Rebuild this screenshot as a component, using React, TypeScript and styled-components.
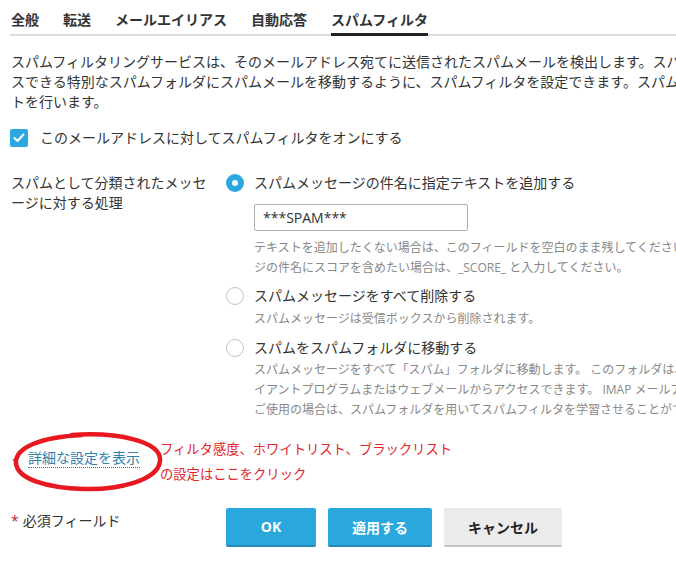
import React from "react";
import styled, { createGlobalStyle, css } from "styled-components";

const Global = createGlobalStyle`
  html, body { margin: 0; padding: 0; background: #fff; overflow: hidden; }
  body {
    font-family: "Open Sans", "Noto Sans CJK JP", sans-serif;
    font-size: 14px;
    color: #333;
  }
  * { box-sizing: border-box; }
`;

const Page = styled.div`
  width: 900px;
  padding: 0 10px;
  position: relative;
`;

const TabBar = styled.div`
  display: flex;
  gap: 24px;
  width: 666px;
  border-bottom: 2px solid #dcdcdc;
  height: 36px;
  padding-left: 1px;
`;

const Tab = styled.div<{ $active?: boolean }>`
  font-weight: 700;
  font-size: 14px;
  line-height: 20px;
  padding-top: 10px;
  color: #333;
  position: relative;
  white-space: nowrap;
  ${(p) =>
    p.$active &&
    css`
      &::after {
        content: "";
        position: absolute;
        left: 0;
        right: 0;
        bottom: -2px;
        height: 3px;
        background: #222;
      }
    `}
`;

const Intro = styled.p`
  margin: 16px 0 0 1px;
  line-height: 20px;
  white-space: nowrap;
`;

const CheckRow = styled.label`
  display: flex;
  align-items: center;
  gap: 12px;
  margin-top: 16px;
  height: 20px;
  line-height: 20px;
`;

const CheckBox = styled.span`
  width: 18px;
  height: 18px;
  border-radius: 2px;
  background: #2aa8df;
  display: inline-flex;
  align-items: center;
  justify-content: center;
`;

const FormGrid = styled.div<{ $top: number }>`
  display: grid;
  grid-template-columns: 204px 1fr;
  column-gap: 12px;
  margin-top: ${(p) => p.$top}px;
`;

const FieldLabel = styled.div`
  line-height: 20px;
  padding-left: 1px;
`;

const Options = styled.div`
  display: flex;
  flex-direction: column;
`;

const Option = styled.div<{ $gap?: number }>`
  margin-top: ${(p) => p.$gap ?? 0}px;
`;

const RadioRow = styled.label`
  display: flex;
  align-items: center;
  gap: 10px;
  line-height: 20px;
  white-space: nowrap;
`;

const Radio = styled.span<{ $checked?: boolean }>`
  width: 18px;
  height: 18px;
  border-radius: 50%;
  flex: none;
  ${(p) =>
    p.$checked
      ? css`
          background: #fff;
          border: 6px solid #2aa8df;
        `
      : css`
          background: #fff;
          border: 1px solid #c4c4c4;
        `}
`;

const Indent = styled.div`
  padding-left: 28px;
`;

const TextInput = styled.input`
  display: block;
  margin-top: 11px;
  width: 214px;
  height: 27px;
  border: 1px solid #b0b0b0;
  border-radius: 2px;
  padding: 0 8px;
  font-family: "Open Sans", "Noto Sans CJK JP", sans-serif;
  font-size: 14px;
  color: #333;
  outline: none;
`;

const Hint = styled.div<{ $top: number }>`
  margin-top: ${(p) => p.$top}px;
  font-size: 12px;
  line-height: 20px;
  color: #888;
  white-space: nowrap;
`;

const AdvancedRow = styled.div`
  display: flex;
  align-items: flex-start;
  margin-top: 17px;
  position: relative;
`;

const AdvLink = styled.a`
  display: flex;
  align-items: center;
  gap: 8px;
  margin-top: 12px;
  margin-left: 2px;
  width: 148px;
  color: #2f80ad;
  text-decoration: none;
  cursor: pointer;
`;

const LinkText = styled.span`
  display: inline-block;
  line-height: 18px;
  border-bottom: 1px dotted #2f6f9a;
`;

const Annotation = styled.div`
  color: #e3242b;
  font-size: 13.3px;
  line-height: 25px;
  white-space: nowrap;
`;

const Ellipse = styled.svg`
  position: absolute;
  left: 2px;
  top: -6px;
  pointer-events: none;
`;

const Required = styled.div`
  padding-top: 3px;
  line-height: 20px;
  padding-left: 1px;
`;

const Star = styled.span`
  color: #c0262d;
  margin-right: 4px;
`;

const Buttons = styled.div`
  display: flex;
  gap: 12px;
`;

const Button = styled.button<{ $primary?: boolean }>`
  height: 39px;
  min-width: 90px;
  padding: 0 24px;
  border: none;
  border-radius: 2px;
  font-family: "Open Sans", "Noto Sans CJK JP", sans-serif;
  font-size: 14px;
  font-weight: 700;
  cursor: pointer;
  ${(p) =>
    p.$primary
      ? css`
          background: #2aa8dd;
          color: #fff;
          border-bottom: 2px solid #2888b3;
        `
      : css`
          background: #ebebeb;
          color: #222;
          border-bottom: 2px solid #c2c2c2;
        `}
`;

export default function App() {
  return (
    <>
      <Global />
      <Page>
        <TabBar>
          <Tab>全般</Tab>
          <Tab>転送</Tab>
          <Tab>メールエイリアス</Tab>
          <Tab>自動応答</Tab>
          <Tab $active>スパムフィルタ</Tab>
        </TabBar>

        <Intro>
          スパムフィルタリングサービスは、そのメールアドレス宛てに送信されたスパムメールを検出します。スパムの件名に特別なテキストを追加したり、メールクライアントからアクセ
          <br />
          スできる特別なスパムフォルダにスパムメールを移動するように、スパムフィルタを設定できます。スパムフィルタは自動的にメッセージのテス
          <br />
          トを行います。
        </Intro>

        <CheckRow>
          <CheckBox>
            <svg width="12" height="10" viewBox="0 0 12 10">
              <polyline
                points="1.5,5 4.5,8 10.5,1.5"
                fill="none"
                stroke="#fff"
                strokeWidth="2"
                strokeLinecap="round"
                strokeLinejoin="round"
              />
            </svg>
          </CheckBox>
          <span>このメールアドレスに対してスパムフィルタをオンにする</span>
        </CheckRow>

        <FormGrid $top={25}>
          <FieldLabel>スパムとして分類されたメッセージに対する処理</FieldLabel>
          <Options>
            <Option>
              <RadioRow>
                <Radio $checked />
                スパムメッセージの件名に指定テキストを追加する
              </RadioRow>
              <Indent>
                <TextInput defaultValue="***SPAM***" />
                <Hint $top={7}>
                  テキストを追加したくない場合は、このフィールドを空白のまま残してください。メッセー
                  <br />
                  ジの件名にスコアを含めたい場合は、_SCORE_ と入力してください。
                </Hint>
              </Indent>
            </Option>
            <Option $gap={8}>
              <RadioRow>
                <Radio />
                スパムメッセージをすべて削除する
              </RadioRow>
              <Indent>
                <Hint $top={3}>スパムメッセージは受信ボックスから削除されます。</Hint>
              </Indent>
            </Option>
            <Option $gap={9}>
              <RadioRow>
                <Radio />
                スパムをスパムフォルダに移動する
              </RadioRow>
              <Indent>
                <Hint $top={2}>
                  スパムメッセージをすべて「スパム」フォルダに移動します。 このフォルダは、メールクラ
                  <br />
                  イアントプログラムまたはウェブメールからアクセスできます。 IMAP メールアカウントを
                  <br />
                  ご使用の場合は、スパムフォルダを用いてスパムフィルタを学習させることができます。
                </Hint>
              </Indent>
            </Option>
          </Options>
        </FormGrid>

        <AdvancedRow>
          <AdvLink>
            <svg width="8" height="8" viewBox="0 0 8 8">
              <polyline
                points="0.8,4.2 2.6,6.6 7.2,1.2"
                fill="none"
                stroke="#3f7aa5"
                strokeWidth="1.1"
              />
            </svg>
            <LinkText>詳細な設定を表示</LinkText>
          </AdvLink>
          <Annotation>
            フィルタ感度、ホワイトリスト、ブラックリスト
            <br />
            の設定はここをクリック
          </Annotation>
          <Ellipse width="156" height="62" viewBox="0 0 156 62">
            <path
              d="M 60 4 C 105 1, 150 10, 148 30 C 146 50, 105 59, 72 58 C 35 57, 5 48, 4 32 C 3 16, 30 6, 70 4"
              fill="none"
              stroke="#e81820"
              strokeWidth="4.5"
              strokeLinecap="round"
            />
          </Ellipse>
        </AdvancedRow>

        <FormGrid $top={21}>
          <Required>
            <Star>*</Star>必須フィールド
          </Required>
          <Buttons>
            <Button $primary>OK</Button>
            <Button $primary>適用する</Button>
            <Button>キャンセル</Button>
          </Buttons>
        </FormGrid>
      </Page>
    </>
  );
}
